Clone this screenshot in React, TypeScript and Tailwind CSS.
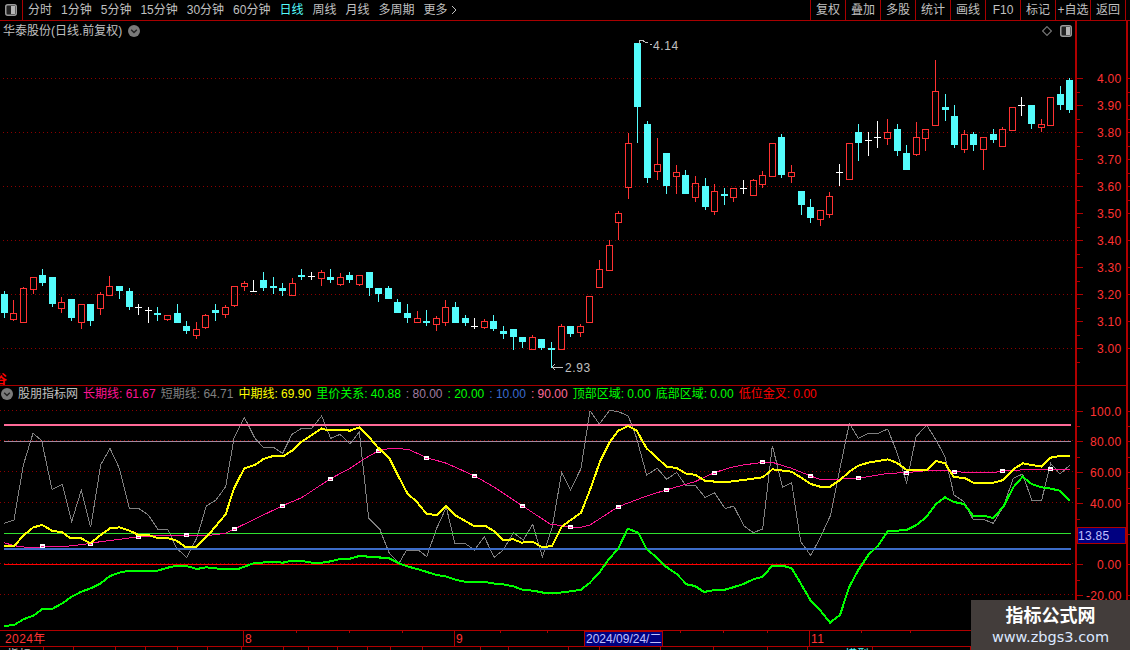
import React from 'react';

type Candle = [string, number, number, number, number];

// kind, body top, body bottom, wick top, wick bottom
const candles: Candle[] = [
  ['c', 294, 313, 291, 318], ['r', 313, 319, 300, 321], ['r', 288, 322, 287, 322], ['r', 277, 289, 277, 294],
  ['c', 275, 283, 269, 286], ['c', 277, 304, 277, 307], ['r', 302, 308, 297, 313], ['c', 299, 318, 299, 321],
  ['r', 304, 322, 304, 329], ['c', 304, 321, 304, 326], ['r', 294, 308, 292, 315], ['r', 286, 295, 276, 296],
  ['c', 286, 291, 286, 299], ['c', 291, 307, 288, 310], ['w', 307, 307, 304, 315], ['w', 310, 310, 307, 323],
  ['c', 313, 315, 307, 321], ['r', 315, 319, 315, 321], ['c', 313, 323, 304, 323], ['c', 326, 331, 321, 334],
  ['r', 329, 335, 322, 339], ['r', 315, 327, 314, 329], ['c', 310, 313, 304, 321], ['r', 307, 314, 305, 318],
  ['r', 286, 305, 286, 307], ['r', 283, 286, 281, 291], ['w', 291, 291, 280, 291], ['c', 280, 288, 272, 291],
  ['c', 286, 288, 277, 294], ['c', 288, 291, 283, 296], ['r', 283, 295, 278, 296], ['c', 275, 277, 269, 280],
  ['w', 276, 276, 272, 280], ['r', 272, 278, 270, 286], ['c', 277, 280, 269, 283], ['r', 277, 284, 273, 286],
  ['c', 275, 280, 272, 283], ['r', 275, 284, 275, 286], ['c', 272, 288, 272, 296], ['c', 288, 294, 288, 302],
  ['c', 288, 299, 286, 299], ['c', 302, 313, 299, 313], ['c', 313, 318, 304, 323], ['r', 318, 322, 311, 323],
  ['c', 321, 323, 310, 326], ['r', 318, 324, 316, 331], ['r', 307, 322, 300, 326], ['c', 307, 323, 302, 323],
  ['c', 318, 323, 315, 326], ['w', 326, 326, 318, 329], ['r', 321, 327, 319, 329], ['c', 321, 329, 315, 331],
  ['c', 331, 334, 326, 339], ['c', 329, 337, 329, 350], ['c', 337, 342, 337, 348], ['r', 337, 349, 335, 349],
  ['c', 339, 348, 339, 350], ['c', 348, 350, 342, 368], ['r', 326, 349, 324, 350], ['c', 326, 334, 326, 337],
  ['r', 326, 332, 324, 337], ['r', 296, 322, 296, 323], ['r', 269, 287, 260, 287], ['r', 245, 270, 240, 270],
  ['r', 213, 222, 211, 240], ['r', 143, 187, 133, 199], ['c', 43, 107, 43, 143], ['c', 124, 178, 121, 183],
  ['r', 164, 171, 138, 180], ['c', 153, 186, 153, 194], ['r', 172, 176, 165, 194], ['c', 175, 194, 170, 194],
  ['r', 183, 197, 176, 202], ['c', 186, 207, 178, 210], ['r', 191, 211, 184, 215], ['c', 194, 196, 188, 205],
  ['r', 188, 197, 188, 202], ['w', 188, 188, 180, 194], ['r', 180, 195, 179, 196], ['r', 175, 184, 171, 188],
  ['r', 143, 176, 143, 176], ['c', 137, 175, 134, 178], ['r', 172, 176, 165, 183], ['c', 191, 205, 191, 215],
  ['c', 207, 218, 199, 223], ['r', 210, 219, 210, 226], ['r', 196, 214, 192, 218], ['w', 172, 172, 164, 186],
  ['r', 143, 179, 143, 180], ['c', 132, 143, 124, 161], ['w', 140, 140, 132, 156], ['w', 137, 137, 121, 148],
  ['r', 132, 138, 119, 145], ['c', 129, 151, 124, 156], ['c', 153, 170, 145, 170], ['r', 137, 154, 122, 156],
  ['r', 129, 138, 129, 151], ['r', 91, 125, 60, 126], ['c', 107, 110, 94, 121], ['c', 116, 145, 105, 148],
  ['r', 134, 149, 130, 153], ['c', 134, 145, 132, 151], ['r', 137, 149, 137, 170], ['c', 134, 140, 129, 143],
  ['r', 129, 146, 127, 146], ['r', 107, 130, 107, 130], ['w', 105, 105, 97, 116], ['c', 105, 124, 105, 129],
  ['r', 124, 127, 119, 132], ['r', 97, 125, 97, 126], ['c', 94, 105, 86, 110], ['c', 80, 110, 78, 113],
];

// traced from the picture at 3x, so every point is divided back down
const seg = (off: number, pts: number[][]) => pts.map(([x, y]) => `${off + x / 3},${400 + y / 3}`).join(' ');

const gray = [
  seg(0, [[12,370],[42,360],[70,195],[99,100],[125,122],[156,268],[187,253],[215,365],[244,270],[272,382],[302,195],[330,145],[358,205],[388,325],[416,325],[445,345],[473,387],[503,387],[530,445],[560,472],[590,415],[619,318],[648,300],[677,260],[702,115],[733,52],[765,115],[790,142],[820,142],[848,160],[876,103],[905,85],[935,85],[965,48],[992,115],[1020,103],[1050,132],[1078,95],[1106,355],[1140,388]]),
  seg(380, [[0,390],[28,460],[57,490],[80,450],[115,450],[140,470],[170,385],[199,322],[225,432],[255,430],[283,450],[313,410],[342,472],[370,450],[400,398],[430,420],[458,373],[487,470],[516,385],[545,217],[572,270],[603,205],[630,32],[658,72],[690,30],[720,37],[745,48],[770,115],[800,225],[832,205],[860,238],[890,217],[918,258],[945,255],[975,292],[1003,278],[1035,325],[1050,322]]),
  seg(730, [[0,320],[12,320],[42,378],[70,398],[98,387],[127,137],[158,262],[185,248],[212,425],[242,466],[270,415],[302,345],[330,205],[358,70],[385,115],[415,100],[445,100],[473,87],[500,155],[530,248],[558,110],[590,75],[618,120],[645,170],[672,285],[702,305],[730,360],[760,358],[790,370],[820,320],[850,235],[878,222],[905,300],[935,300],[962,190],[990,222],[1020,195]]),
].join(' ');

const yellow = [
  seg(0, [[12,438],[42,438],[72,405],[100,382],[127,375],[156,392],[187,397],[212,415],[244,415],[270,430],[302,405],[330,385],[358,382],[388,392],[416,405],[445,405],[473,414],[503,414],[530,422],[555,440],[590,440],[625,405],[677,343],[702,265],[733,205],[765,195],[790,177],[820,168],[852,167],[876,152],[905,125],[965,85],[980,90],[1020,89],[1050,92],[1078,82],[1106,110],[1140,150]]),
  seg(380, [[0,147],[28,175],[55,228],[82,280],[110,305],[140,342],[170,345],[199,318],[228,347],[280,377],[315,377],[345,395],[370,420],[400,418],[425,428],[458,425],[487,442],[516,438],[545,380],[603,338],[630,270],[660,185],[690,125],[715,92],[745,78],[770,92],[800,145],[860,200],[890,204],[920,222],[945,224],[975,242],[1005,245],[1050,245]]),
  seg(730, [[0,245],[40,240],[98,232],[127,208],[185,215],[212,232],[242,252],[270,260],[300,260],[330,240],[358,215],[385,197],[415,188],[473,178],[500,188],[530,210],[590,210],[618,183],[645,190],[672,232],[702,233],[730,248],[790,248],[820,240],[850,208],[878,190],[905,195],[935,200],[962,173],[990,168],[1020,168]]),
].join(' ');

const magenta = [
  seg(0, [[12,428],[42,437],[72,441],[127,441],[187,440],[244,434],[302,425],[358,418],[416,410],[473,407],[560,407],[619,407],[677,400],[703,387],[790,345],[848,317],[905,293],[990,237],[1050,205],[1090,178],[1140,150]]),
  seg(380, [[0,150],[30,146],[60,146],[90,150],[140,173],[200,190],[284,228],[340,260],[428,318],[510,372],[545,377],[572,381],[603,382],[630,375],[715,320],[800,288],[858,270],[945,245],[1003,218],[1050,203]]),
  seg(730, [[0,203],[40,195],[98,187],[127,187],[185,205],[242,228],[270,238],[300,239],[385,234],[415,230],[473,220],[530,218],[590,212],[645,212],[672,215],[730,218],[790,218],[820,213],[905,208],[962,208],[1020,208]]),
].join(' ');

const green = [
  seg(0, [[12,678],[42,675],[72,657],[100,647],[127,627],[156,627],[187,610],[215,590],[244,575],[272,565],[302,550],[330,528],[358,518],[388,512],[473,512],[503,503],[530,497],[560,498],[590,507],[619,502],[665,507],[715,507],[760,490],[820,485],[848,488],[876,482],[905,483],[935,488],[965,488],[992,484],[1020,477],[1050,476],[1078,468],[1106,470],[1140,471]]),
  seg(380, [[0,474],[28,475],[57,490],[85,500],[115,508],[170,525],[200,530],[230,540],[260,546],[315,546],[345,551],[370,553],[400,559],[430,570],[460,572],[490,578],[540,578],[572,574],[603,569],[630,548],[660,515],[685,480],[715,445],[743,386],[775,398],[800,448],[830,472],[858,500],[890,522],[920,553],[945,558],[972,576],[1003,570],[1035,569],[1050,565]]),
  seg(730, [[0,565],[40,552],[70,538],[98,530],[127,497],[158,497],[185,505],[212,550],[242,602],[270,630],[300,668],[330,645],[358,560],[385,510],[415,465],[445,436],[473,394],[530,390],[558,376],[590,350],[618,312],[645,292],[672,306],[702,312],[730,348],[760,347],[790,354],[820,320],[850,262],[878,230],[905,252],[935,262],[962,266],[990,272],[1020,302]]),
].join(' ');

const markers: [number, number][] = [
  [42, 546], [90, 544], [138, 537], [186, 535], [234, 529], [282, 506], [330, 479], [378, 451],
  [426, 458], [474, 476], [522, 506], [570, 527], [618, 507], [666, 490], [714, 473], [762, 462],
  [810, 476], [858, 478], [906, 473], [954, 472], [1002, 471], [1050, 469],
];

const tabs = ['分时', '1分钟', '5分钟', '15分钟', '30分钟', '60分钟', '日线', '周线', '月线', '多周期', '更多'];
const buttons = ['复权', '叠加', '多股', '统计', '画线', 'F10', '标记', '+自选', '返回'];
const priceLabels = ['4.00', '3.90', '3.80', '3.70', '3.60', '3.50', '3.40', '3.30', '3.20', '3.10', '3.00'];
const indLabels: [string, number, number][] = [
  ['100.0', 1090, 411], ['80.00', 1090, 441.5], ['60.00', 1090, 472.5], ['40.00', 1090, 503.5],
  ['0.00', 1097, 564.5], ['-20.00', 1086, 595.5],
];
const gridY = [78, 132, 186, 240, 294, 348];
const lowerGridY = [411, 441, 472, 503, 564, 595];
const dateTicks = [296, 349, 402, 500, 547, 628, 680, 723, 767, 861, 910];
const footTicks = [43, 73, 115, 145, 177, 207, 241, 283, 308, 337, 367, 390, 422, 480, 508, 568, 599, 660, 713, 767, 807, 872, 970];

const ToggleIcon = ({ className }: { className: string }) => (
  <svg viewBox="0 0 12 12" className={className}>
    <rect x="0.75" y="0.75" width="10.5" height="10.5" rx="2" fill="#222" stroke="#9a9a9a" strokeWidth="1.5" />
    <rect x="6" y="2" width="4" height="8" fill="#b5b5b5" />
  </svg>
);

const ChevronDot = () => (
  <svg viewBox="0 0 12 12" className="h-[12px] w-[12px] shrink-0">
    <circle cx="6" cy="6" r="6" fill="#7a7a7a" />
    <path d="M3.2 4.8 6 7.6l2.8-2.8" fill="none" stroke="#222" strokeWidth="1.4" />
  </svg>
);

const CandleMark = ({ c, i }: { c: Candle; i: number }) => {
  const x = Math.floor(4.3 + 9.6 * i) + 0.5;
  const [kind, top, bottom, high, low] = c;
  if (kind === 'w') {
    return (
      <g stroke="#ffffff">
        <path d={`M${x} ${high}V${low}M${x - 3.5} ${top + 0.5}H${x + 3.5}`} />
      </g>
    );
  }
  if (kind === 'c') {
    return (
      <g>
        <path d={`M${x} ${high}V${low}`} stroke="#54fcfc" />
        <rect x={x - 3.5} y={top} width={7} height={Math.max(bottom - top, 2)} fill="#54fcfc" />
      </g>
    );
  }
  return (
    <g stroke="#ff3232" fill="none">
      <path d={`M${x} ${high}V${top}M${x} ${bottom}V${low}`} />
      <rect x={x - 3} y={top + 0.5} width={6} height={bottom - top} />
    </g>
  );
};

export default function App() {
  return (
    <div className="relative h-[650px] w-[1130px] overflow-hidden bg-black text-xs font-['Liberation_Sans','Noto_Sans_CJK_SC',sans-serif] text-[#c0c0c0]">
      {/* top toolbar */}
      <div className="flex h-[21px] items-center border-b border-[#a80000]">
        <div className="flex h-full w-[23px] items-center justify-center border-r border-[#a80000]">
          <ToggleIcon className="h-[12px] w-[12px]" />
        </div>
        <div className="ml-[5px] flex items-center gap-[9px]">
          {tabs.map((t) => (
            <span key={t} className={t === '日线' ? 'text-[#54fcfc]' : ''}>{t}</span>
          ))}
          <svg viewBox="0 0 6 10" className="-ml-[6px] h-[10px] w-[6px]">
            <path d="M1 1l4 4-4 4" fill="none" stroke="#c0c0c0" />
          </svg>
        </div>
        <div className="ml-auto mr-[4px] flex h-full border-r border-[#a80000]">
          {buttons.map((b) => (
            <span key={b} className="flex h-full w-[35px] items-center justify-center border-l border-[#a80000]">{b}</span>
          ))}
        </div>
      </div>

      <div className="flex h-[609px]">
        <div className="flex w-[1075px] flex-col">
          {/* price pane */}
          <div className="relative h-[364px]">
            <div className="absolute left-[3px] top-[2px] flex items-center gap-[6px]">
              <span>华泰股份(日线.前复权)</span>
              <ChevronDot />
            </div>
            <svg viewBox="0 0 9 9" className="absolute left-[1042px] top-[5px] h-[10px] w-[10px]">
              <path d="M4.5.5l4 4-4 4-4-4z" fill="none" stroke="#777" />
            </svg>
            <ToggleIcon className="absolute left-[1060px] top-[4px] h-[12px] w-[12px]" />
            <svg viewBox="0 21 1075 364" className="h-[364px] w-[1075px]" shapeRendering="crispEdges">
              {gridY.map((y) => (
                <path key={y} d={`M3 ${y + 0.5}H1075`} stroke="#8c0000" strokeDasharray="1 3" />
              ))}
              {candles.map((c, i) => (
                <CandleMark key={i} c={c} i={i} />
              ))}
              <path d="M639 44V40h3M642 40l3 2h3M650 44h2" fill="none" stroke="#c0c0c0" />
              <text x="653" y="50" fill="#c0c0c0" letterSpacing="0.6">4.14</text>
              <path d="M552 367H563M552 367l3-3M552 367l3 3" fill="none" stroke="#c0c0c0" />
              <text x="565" y="372" fill="#c0c0c0" letterSpacing="0.6">2.93</text>
              <text x="-5" y="384" fill="#ff0000" fontWeight="700">谷</text>
            </svg>
          </div>

          {/* indicator legend */}
          <div className="flex h-[17px] items-center gap-[5px] whitespace-pre border-t border-[#a80000] pl-[1px]">
            <div className="flex items-center gap-[5px]">
              <ChevronDot />
              <span>股朋指标网</span>
            </div>
            <span className="text-[#ff1493]">长期线: 61.67</span>
            <span className="text-[#808080]">短期线: 64.71</span>
            <span className="text-[#ffff00]">中期线: 69.90</span>
            <span className="text-[#00ff00]">里价关系: 40.88</span>
            <span className="text-[#a07ca0]">: 80.00</span>
            <span className="text-[#00ff00]">: 20.00</span>
            <span className="text-[#3c6cd0]">: 10.00</span>
            <span className="text-[#ff6a98]">: 90.00</span>
            <span className="text-[#00ff00]">顶部区域: 0.00</span>
            <span className="text-[#00ff00]">底部区域: 0.00</span>
            <span className="text-[#ff0000]">低位金叉: 0.00</span>
          </div>

          {/* indicator pane */}
          <svg viewBox="0 402 1075 228" className="h-[228px] w-[1075px]" shapeRendering="crispEdges">
            {lowerGridY.map((y) => (
              <path key={y} d={`M0 ${y - 0.5}H1075`} stroke="#8c0000" strokeDasharray="1 3" />
            ))}
            <polyline points={gray} fill="none" stroke="#808080" />
            <path d="M4 425H1071" stroke="#ff6a98" strokeWidth="2" />
            <path d="M4 441.5H1071" stroke="#a58aa0" />
            <path d="M4 533.5H1071" stroke="#30e030" />
            <path d="M4 549H1071" stroke="#3c6cc8" strokeWidth="2" />
            <path d="M4 564.5H1071" stroke="#ff0000" strokeWidth="1.4" />
            <polyline points={magenta} fill="none" stroke="#ff1493" />
            {markers.map(([x, y]) => (
              <g key={x}>
                <rect x={x - 2.5} y={y - 2} width={5} height={4} fill="#ffffff" />
                <path d={`M${x - 1} ${y + 0.5}H${x + 2}`} stroke="#ff1493" />
              </g>
            ))}
            <polyline points={yellow} fill="none" stroke="#ffff00" strokeWidth="2" />
            <polyline points={green} fill="none" stroke="#00ff00" strokeWidth="2" />
          </svg>
        </div>

        {/* value axis */}
        <div className="w-[51px] border-l-2 border-[#b00000]">
          <svg viewBox="1077 21 49 609" className="h-[609px] w-[49px]" shapeRendering="crispEdges">
            <path d="M1077 385.5H1126" stroke="#a80000" />
            {priceLabels.map((l, i) => (
              <g key={l}>
                <path d={`M1077 ${78.5 + 27 * i}H1083M1077 ${92 + 27 * i}H1080`} stroke="#b00000" />
                <text x="1097" y={83 + 27 * i} fill="#ff3232" letterSpacing="0.3" shapeRendering="auto">{l}</text>
              </g>
            ))}
            {indLabels.map(([l, x, y]) => (
              <g key={l}>
                <path d={`M1077 ${y}H1083M1077 ${y + 15.5}H1080`} stroke="#b00000" />
                <text x={x} y={y + 4.5} fill="#ff3232" letterSpacing="0.3">{l}</text>
              </g>
            ))}
            <rect x="1077" y="527.5" width="48" height="16" fill="#000080" stroke="#b00000" />
            <text x="1078" y="540" fill="#c0c0ff" letterSpacing="0.3">13.85</text>
          </svg>
        </div>
        <div className="w-[4px] border-l-2 border-[#b00000]">
          <svg viewBox="1128 21 2 609" className="h-[609px] w-[2px]" shapeRendering="crispEdges">
            {[78, 92, 105, 119, 132, 146, 159, 173, 186, 200, 213, 240, 267, 294, 321, 348, 411, 426, 441, 457, 472, 488, 503, 534, 564, 595].map((y) => (
              <path key={y} d={`M1128 ${y + 0.5}H1130`} stroke="#b00000" />
            ))}
          </svg>
        </div>
      </div>

      {/* date axis */}
      <div className="h-[17px] border-y border-[#b00000]">
        <svg viewBox="0 631 1130 15" className="h-[15px] w-[1130px]" shapeRendering="crispEdges">
          {dateTicks.map((x) => (
            <path key={x} d={`M${x + 0.5} 631V633`} stroke="#b00000" />
          ))}
          <path d="M243.5 631V646M454.5 631V646M809.5 631V646" stroke="#b00000" />
          <text x="5" y="643" fill="#ff3232" letterSpacing="0.4">2024年</text>
          <text x="245" y="643" fill="#ff3232">8</text>
          <text x="456" y="643" fill="#ff3232">9</text>
          <text x="811" y="643" fill="#ff3232" letterSpacing="0.4">11</text>
          <rect x="584.5" y="631" width="78" height="15" fill="#000080" stroke="#b00000" />
          <text x="586" y="643" fill="#c0c0ff">2024/09/24/二</text>
        </svg>
      </div>

      {/* cut-off footer tabs */}
      <div className="relative h-[3px] overflow-hidden">
        <svg viewBox="0 647 1130 3" className="h-[3px] w-[1130px]" shapeRendering="crispEdges">
          {footTicks.map((x) => (
            <path key={x} d={`M${x + 0.5} 647V650`} stroke="#b00000" />
          ))}
        </svg>
        <span className="absolute left-[7px] top-[1px] whitespace-pre leading-[14px] text-[#c0c0c0]">指标</span>
        <span className="absolute left-[845px] top-[1px] whitespace-pre leading-[14px] text-[#54fcfc]">模型</span>
      </div>

      {/* site watermark */}
      <div className="absolute bottom-0 right-0 flex h-[50px] w-[159px] flex-col items-center justify-center bg-[#433d3b]">
        <span className="text-[18px] font-bold leading-[24px] text-white">指标公式网</span>
        <span className="font-['DejaVu_Sans',sans-serif] text-[14.5px] leading-[18px] text-[#dce8ff]">www.zbgs3.com</span>
      </div>
    </div>
  );
}
